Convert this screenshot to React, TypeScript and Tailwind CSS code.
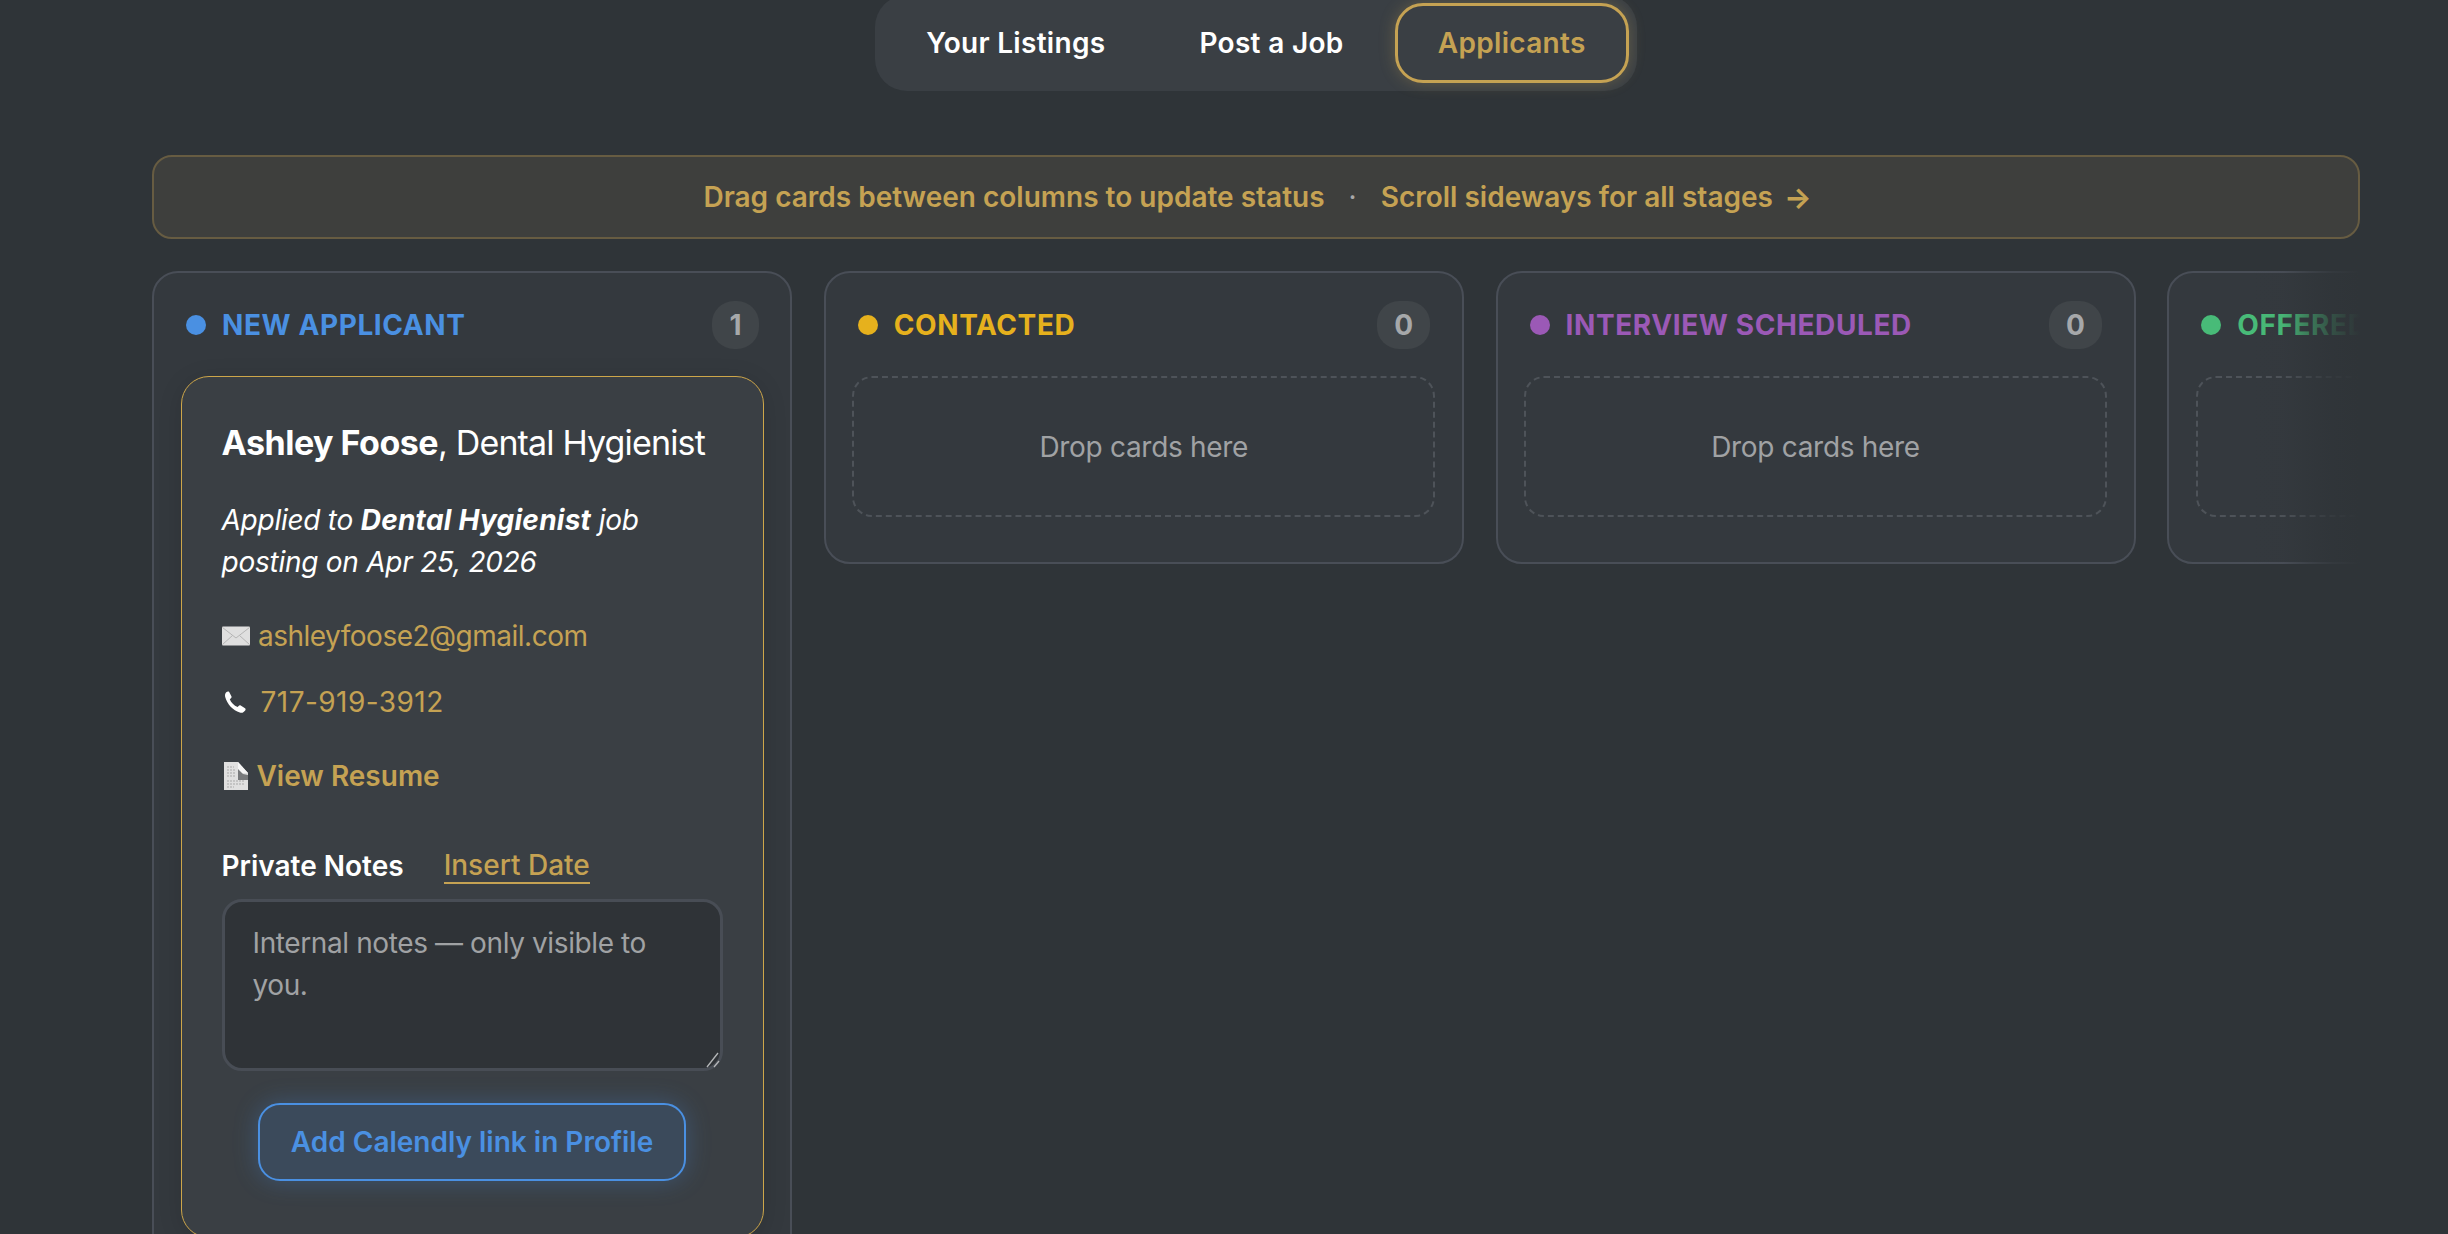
import React from "react";

const columns = [
  { title: "CONTACTED", dot: "bg-[#e6b11d]", text: "text-[#e6b11d]" },
  { title: "INTERVIEW SCHEDULED", dot: "bg-[#9b59b6]", text: "text-[#9b59b6]" },
  { title: "OFFERED", dot: "bg-[#48bb78]", text: "text-[#48bb78]" },
];

function ColumnHeader({
  title,
  count,
  dot,
  text,
}: {
  title: string;
  count: number;
  dot: string;
  text: string;
}) {
  return (
    <div className="flex items-center justify-between pl-[5.5px] pr-[5px] mb-[27px]">
      <div className="flex items-center gap-4">
        <span className={`w-5 h-5 rounded-full ${dot}`} />
        <span className={`text-[28px] leading-[48px] font-bold tracking-[0.6px] whitespace-nowrap ${text}`}>{title}</span>
      </div>
      <span className="h-12 px-[17px] rounded-[22px] bg-[#404549] flex items-center justify-center text-[28px] font-bold text-[#a6a8aa]">
        {count}
      </span>
    </div>
  );
}

function MailIcon() {
  return (
    <svg width="28" height="20" viewBox="0 0 28 20" className="shrink-0">
      <rect width="28" height="19" y="0.5" fill="#dfdfdf" rx="1" />
      <path d="M0.5 1.5 14 12 27.5 1.5M0.5 18.5 10.5 9.5M27.5 18.5 17.5 9.5" fill="none" stroke="#b5b5b5" strokeWidth="1" />
    </svg>
  );
}

function PhoneIcon() {
  return (
    <svg width="22" height="22" viewBox="0 0 22 22" className="shrink-0">
      <path
        d="M2 1.5C3 .5 4.5.2 5.2 1L7.5 5.5C7.8 6.3 7.4 7 6.7 7.5L5.8 8.2C7 11.5 10 14.5 13.6 16L14.6 15C15.2 14.3 16 14.2 16.7 14.6L21 17.2C21.8 17.8 21.8 18.6 21.2 19.4L19.6 21C18.6 21.9 17.2 22 15.8 21.6C9 19.5 3 13 1.2 6C.8 4.2 1 2.6 2 1.5Z"
        fill="#ffffff"
      />
    </svg>
  );
}

function FileIcon() {
  return (
    <svg width="24" height="28" viewBox="0 0 24 28" className="shrink-0">
      <path d="M0 0H14L24 11V28H0Z" fill="#e0e0e0" />
      <path d="M14 0 24 11H14Z" fill="#f5f5f5" />
      <path d="M14 7 19 12 24 13V18H14Z" fill="#77797b" />
      <path
        d="M3 5H10M3 8H11M3 11H11M3 14H12M3 19H20M3 22H20M3 25H10"
        stroke="#a9a9a9"
        strokeWidth="1"
        strokeDasharray="2 1"
      />
    </svg>
  );
}

function ApplicantCard() {
  return (
    <div className="rounded-[28px] border-[1.5px] border-[#cda64a] bg-[#3a3f44] px-10 pt-[39px] pb-[56px] shadow-[0_4px_24px_rgba(0,0,0,0.12)] text-white">
      <h3 className="text-[34px] leading-[54px] tracking-[-0.85px] whitespace-nowrap">
        <strong className="font-bold tracking-[-0.5px]">Ashley Foose</strong>, Dental Hygienist
      </h3>
      <p className="mt-[29px] text-[28px] leading-[42px] italic tracking-[-0.25px]">
        Applied to <strong className="font-bold tracking-[0.25px]">Dental Hygienist</strong> job posting on Apr 25, 2026
      </p>
      <div className="mt-[32px] flex items-center gap-[8.5px] h-[42px] text-[28px] tracking-[-0.5px] text-[#c5a253]">
        <MailIcon />
        ashleyfoose2@gmail.com
      </div>
      <div className="mt-[24px] flex items-center gap-[15px] h-[42px] text-[28px] tracking-[0.45px] text-[#c5a253]">
        <span className="pl-[2px] flex">
          <PhoneIcon />
        </span>
        717-919-3912
      </div>
      <div className="mt-[32px] flex items-center gap-[9px] h-[42px] pl-[2px] text-[28px] font-semibold text-[#c5a253]">
        <FileIcon />
        View Resume
      </div>
      <div className="mt-[48px] flex items-center gap-10 h-[42px] text-[28px]">
        <span className="font-semibold">Private Notes</span>
        <span className="text-[#c5a253] font-medium leading-[33px] border-b-2 border-[#c5a253]">Insert Date</span>
      </div>
      <div className="relative mt-[12px]">
        <textarea
          readOnly
          placeholder="Internal notes — only visible to you."
          className="block w-full h-[172px] resize-none rounded-[20px] border-[3px] border-[#484d55] bg-[#2f3337] px-[28px] py-[20px] text-[28px] leading-[42px] tracking-[-0.39px] outline-none placeholder:text-[#a0a2a4]"
        />
        <svg width="14" height="16" viewBox="0 0 14 16" className="absolute right-[3px] bottom-[3px]">
          <path d="M1 15 12 1M8 15 13 9" fill="none" stroke="#b4b6b8" strokeWidth="1.3" />
        </svg>
      </div>
      <div className="mt-[32px] flex justify-center">
        <button className="w-[428px] h-[78px] rounded-[22px] border-2 border-[#4a90e2] bg-[#3b4a5b] text-[28px] font-semibold text-[#4a90e2] shadow-[0_0_24px_rgba(74,144,226,0.3)]">
          Add Calendly link in Profile
        </button>
      </div>
    </div>
  );
}

export default function App() {
  return (
    <div className="h-[1234px] overflow-hidden bg-[#2f3438] pl-[152px] pr-[88px] font-['Inter',sans-serif]">
      <div className="flex justify-center -mt-[5px]">
        <nav className="flex items-center gap-[8px] h-[96px] px-2 rounded-[32px] bg-[#3a3f44] text-[28px] font-semibold tracking-[0.3px] text-white">
          <a className="px-[43px]">Your Listings</a>
          <a className="px-[43px]">Post a Job</a>
          <a className="h-[80px] flex items-center px-[40.25px] rounded-[28px] border-[3px] border-[#c5a253] text-[#c5a253] shadow-[0_0_16px_rgba(197,162,83,0.3)]">
            Applicants
          </a>
        </nav>
      </div>

      <div className="mt-[64px] h-[84px] pl-[3px] rounded-[20px] border-2 border-[#675c42] bg-[#3e3f3d] flex items-center justify-center text-[28px] font-semibold text-[#c5a253]">
        Drag cards between columns to update status
        <span className="mx-[24px] font-normal text-[#a9a9a9]">·</span>
        Scroll sideways for all stages
        <span className="ml-[11px] font-bold text-[29px] leading-none">→</span>
      </div>

      <div className="relative mt-[32px] overflow-hidden">
        <div className="flex items-start gap-[31.75px]">
          <section className="w-[640px] shrink-0 rounded-[26px] border-2 border-[#494e57] bg-[#34393e] px-[26.5px] pt-[28px] pb-[32px]">
            <ColumnHeader title="NEW APPLICANT" count={1} dot="bg-[#4a90e2]" text="text-[#4a90e2]" />
            <ApplicantCard />
          </section>

          {columns.map((col) => (
            <section
              key={col.title}
              className="w-[640px] shrink-0 rounded-[26px] border-2 border-[#494e57] bg-[#34393e] px-[26.5px] pt-[28px] pb-[45px]"
            >
              <ColumnHeader title={col.title} count={0} dot={col.dot} text={col.text} />
              <div className="h-[141px] rounded-[20px] border-2 border-dashed border-[#4e5359] flex items-center justify-center text-[28px] tracking-[-0.3px] text-[#a0a2a4]">
                Drop cards here
              </div>
            </section>
          ))}
        </div>
        <div className="absolute inset-y-0 right-0 w-[110px] bg-[linear-gradient(to_right,rgba(47,52,56,0)_0%,rgba(47,52,56,0.05)_30%,rgba(47,52,56,0.45)_52%,rgba(47,52,56,0.8)_75%,#2f3438_100%)]" />
      </div>
    </div>
  );
}
